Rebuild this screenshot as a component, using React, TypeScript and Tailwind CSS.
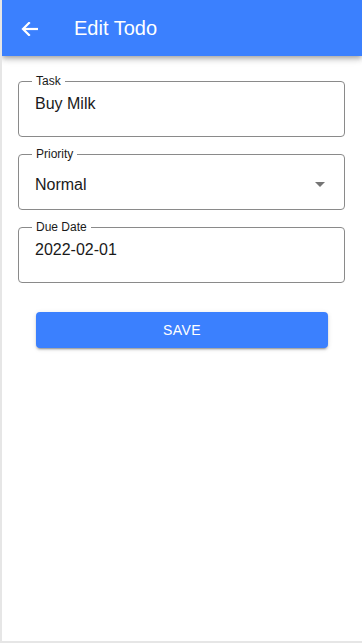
import React from "react";

function Field({
    label,
    value,
    select,
    top,
}: {
    label: string;
    value: string;
    select?: boolean;
    top?: boolean;
}) {
    return (
        <div className="relative h-[56px] rounded-[4px] border border-[#8a8a8a]">
            <span className="absolute -top-[8px] left-[13px] bg-white px-[4px] text-[12px] leading-[14px] text-[#1a1a1a]">
                {label}
            </span>
            <div
                className={
                    select
                        ? "flex items-center justify-between pl-[16px] pr-[12px] pt-[17px]"
                        : "flex items-center pl-[16px] pt-[12px]"
                }
            >
                <span className="text-[16px] leading-[19px] text-[#1a1a1a]">{value}</span>
                {select && (
                    <svg width="24" height="24" viewBox="0 0 24 24" className="text-[#757575]">
                        <path d="M7 10l5 5 5-5z" fill="currentColor" />
                    </svg>
                )}
            </div>
        </div>
    );
}

export default function App() {
    return (
        <div
            className="w-[362px] h-[643px] flex flex-col bg-white border-l-2 border-b-2 border-[#e6e6e6] overflow-hidden"
            style={{ fontFamily: '"Liberation Sans", Arial, sans-serif' }}
        >
            {/* App bar */}
            <header className="relative z-10 h-[56px] shrink-0 flex items-center bg-[#3b80fe] text-white shadow-[0_2px_4px_-1px_rgba(0,0,0,0.2),0_4px_5px_0_rgba(0,0,0,0.14),0_1px_10px_0_rgba(0,0,0,0.12)]">
                <svg
                    width="18"
                    height="14"
                    viewBox="0 0 18 14"
                    className="ml-[19px] mt-[2px]"
                    fill="none"
                    stroke="currentColor"
                    strokeWidth="2.2"
                >
                    <path d="M8 1 L2 7 L8 13" strokeLinecap="square" />
                    <path d="M2.5 7 H17" />
                </svg>
                <h1 className="ml-[35px] text-[20px] leading-[24px] font-normal">Edit Todo</h1>
            </header>

            {/* Form */}
            <div className="flex flex-col pl-[16px] pt-[25px] w-[343px] gap-[17px]">
                <Field label="Task" value="Buy Milk" />
                <Field label="Priority" value="Normal" select />
                <Field label="Due Date" value="2022-02-01" />
            </div>

            <button className="mt-[29px] ml-[34px] w-[292px] h-[36px] rounded-[4px] bg-[#3b80fe] text-white text-[14px] tracking-[0.4px] leading-[16px] shadow-[0_3px_1px_-2px_rgba(0,0,0,0.2),0_2px_2px_0_rgba(0,0,0,0.14),0_1px_5px_0_rgba(0,0,0,0.12)]">
                SAVE
            </button>
        </div>
    );
}
